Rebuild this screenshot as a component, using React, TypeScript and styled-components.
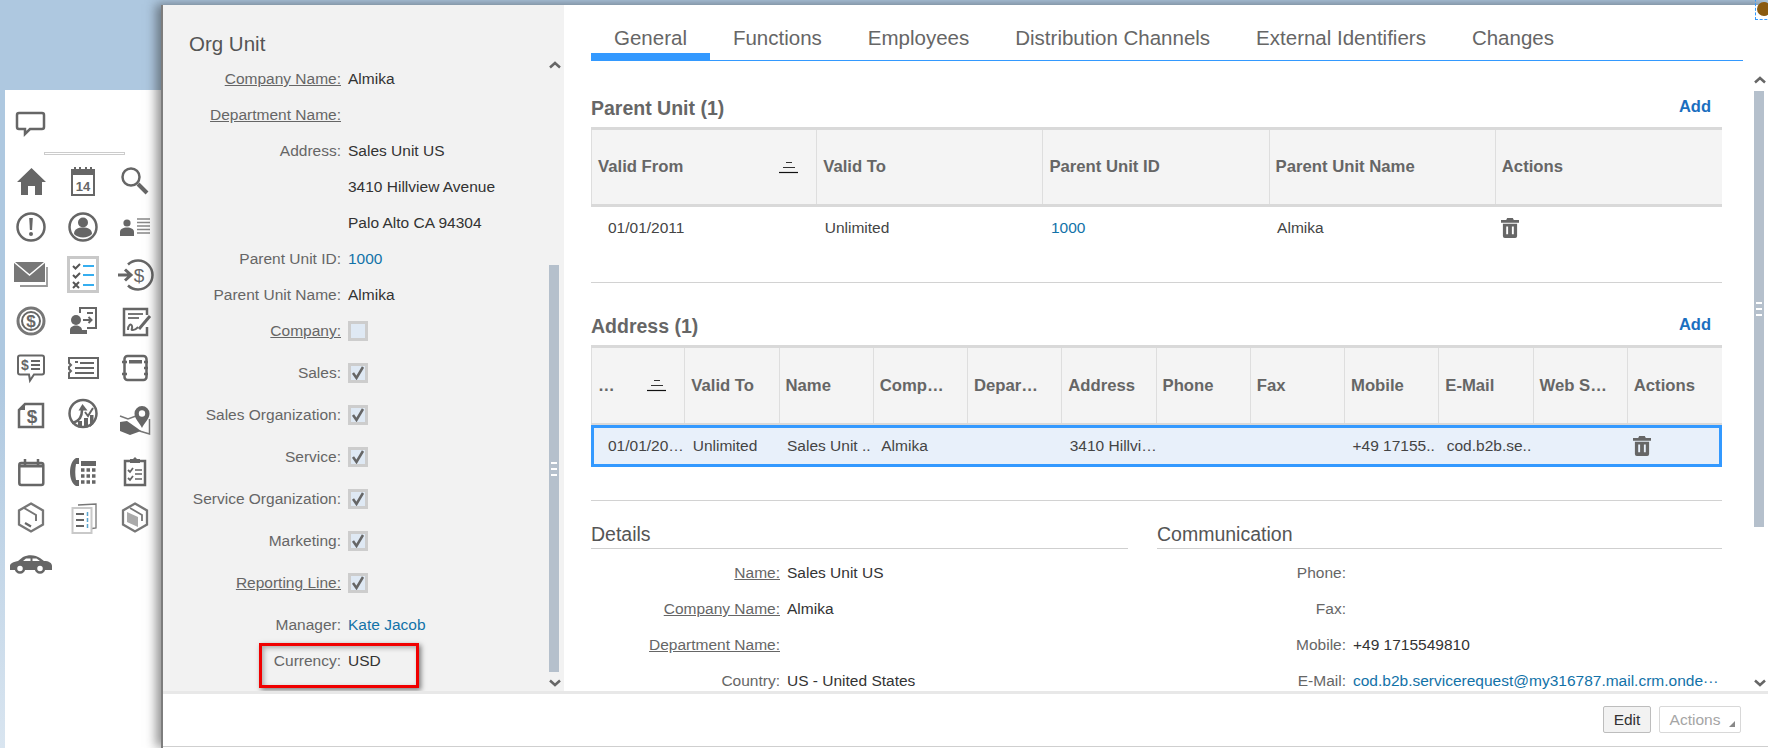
import React from "react";
import styled, { createGlobalStyle } from "styled-components";

const Global = createGlobalStyle`
  html, body { margin: 0; padding: 0; background: #aec8e0; }
  * { box-sizing: border-box; }
  body { font-family: "Liberation Sans", Arial, sans-serif; font-size: 15.5px; color: #333; }
`;

const Page = styled.div`
  position: relative;
  width: 1768px;
  height: 748px;
  overflow: hidden;
  display: flex;
  background: linear-gradient(#aec8e0 0%, #aec8e0 50%, #d9e5f0 100%);
`;

const Nav = styled.nav`
  width: 156px;
  margin: 90px 0 0 5px;
  padding-top: 20px;
  background: #fff;
`;
const NavDivider = styled.div`
  width: 81px;
  height: 3px;
  margin: 12px 0 3px 39px;
  border: 1px solid #ccc;
`;
const NavRow = styled.div<{ $gap?: number; $h?: number }>`
  display: grid;
  grid-template-columns: repeat(3, 52px);
  grid-template-rows: 100%;
  height: ${(p) => p.$h ?? 46}px;
  margin-top: ${(p) => p.$gap ?? 0}px;
  align-items: center;
  justify-items: center;
`;
const Glyph = styled.svg`
  display: block;
  width: 40px;
  height: 40px;
  overflow: visible;
  color: #666;
`;
const G = ({ children }: { children: React.ReactNode }) => <Glyph viewBox="0 0 40 40">{children}</Glyph>;
const gt = { fontFamily: '"Liberation Sans", Arial, sans-serif', fontWeight: 700, fill: "#666", textAnchor: "middle" as const };
const s = { fill: "none", stroke: "#666", strokeWidth: 2.5 };
const s2 = { fill: "none", stroke: "#666", strokeWidth: 2 };

const IconSpeech = () => (
  <G>
    <path {...s} d="M8 8h23a2 2 0 0 1 2 2v12a2 2 0 0 1-2 2H19l-5 5v-5H8a2 2 0 0 1-2-2V10a2 2 0 0 1 2-2z" />
  </G>
);
const IconHome = () => (
  <G>
    <path fill="#666" d="M20.5 7 35 21h-4v13h-7v-9h-7v9h-7V21H6z" />
  </G>
);
const IconCalendar14 = () => (
  <G>
    <rect {...s2} x="9" y="9" width="22" height="25" />
    <rect x="9" y="9" width="22" height="5" fill="#666" />
    <path stroke="#666" strokeWidth="2" d="M12 6v5M17 6v5M23 6v5M28 6v5" />
    <text {...gt} x="20" y="30" fontSize="13">14</text>
  </G>
);
const IconSearch = () => (
  <G>
    <circle {...s} cx="16" cy="16" r="8.5" />
    <path stroke="#666" strokeWidth="4" d="M23 23l9 9" />
  </G>
);
const IconAlert = () => (
  <G>
    <circle {...s} cx="20" cy="20" r="13.5" />
    <path fill="#666" d="M18.2 11h3.6l-.7 12h-2.2z" />
    <circle cx="20" cy="27" r="2" fill="#666" />
  </G>
);
const IconPerson = () => (
  <G>
    <circle {...s} cx="20" cy="20" r="13.5" />
    <circle cx="20" cy="15.5" r="5" fill="#666" />
    <path fill="#666" d="M11 27c0-5 4-6.500 9-6.500s9 1.500 9 6.500c-2 2-5.500 3.500-9 3.500s-7-1.500-9-3.500z" />
  </G>
);
const IconPersonList = () => (
  <G>
    <circle cx="12" cy="16" r="3.600" fill="#666" />
    <path fill="#666" d="M5 29v-4c0-3 3-4.500 7-4.500s7 1.500 7 4.500v4z" />
    <path stroke="#888" strokeWidth="1.500" d="M22 12h13M22 15.500h13M22 19h13M22 22.500h13M22 26h13" />
  </G>
);
const IconMail = () => (
  <G>
    <path fill="none" stroke="#999" strokeWidth="1.800" d="M36 13v19H9" />
    <rect x="3" y="8" width="31" height="20" fill="#777" />
    <path fill="none" stroke="#fff" strokeWidth="1.500" d="M3 8l15.500 13L34 8" />
  </G>
);
const IconChecklist = () => (
  <G>
    <rect x="5.500" y="3.500" width="29" height="34" fill="#fff" stroke="#c9c9c9" strokeWidth="3" />
    <path fill="none" stroke="#555" strokeWidth="2" d="M10 12l2.500 2.500L17 10M10 21l2.500 2.500L17 19M10 28l6 6M16 28l-6 6" />
    <path stroke="#35aef0" strokeWidth="2" d="M20 12h11M20 21h11M20 31h11" />
  </G>
);
const IconArrowDollar = () => (
  <G>
    <path {...s} d="M13 10.500a14.500 14.500 0 1 1 0 21" />
    <path fill="none" stroke="#666" strokeWidth="3" d="M3 21h12M10 15.500l6 5.500-6 5.500" />
    <text {...gt} x="24" y="28" fontSize="19" fontWeight="400">$</text>
  </G>
);
const IconCoin = () => (
  <G>
    <circle fill="none" stroke="#777" strokeWidth="3" cx="20" cy="20" r="13" />
    <circle {...s2} cx="20" cy="20" r="9" />
    <text {...gt} x="20" y="26" fontSize="17">$</text>
  </G>
);
const IconPersonDoc = () => (
  <G>
    <path {...s2} d="M17 12V7h16v20H24" />
    <path stroke="#666" strokeWidth="2" fill="none" d="M20 19h8M25.500 16l3 3-3 3M24 12h6" />
    <circle cx="13" cy="19" r="5" fill="#666" />
    <path fill="#666" d="M7 33v-4c0-3 3-4.500 6-4.500s6 1.500 6 4.500h5v4z" />
  </G>
);
const IconReport = () => (
  <G>
    <path {...s} d="M32 14V8H9v26h23v-8" />
    <path stroke="#777" strokeWidth="1.800" d="M13 13h15M13 17h11" />
    <path fill="none" stroke="#666" strokeWidth="2" d="M13 29c0-5 3-7 4-4s-2 4 1 4 4-2 5-3" />
    <path fill="none" stroke="#666" strokeWidth="3" d="M24 28l11-13" />
  </G>
);
const IconSpeechDollar = () => (
  <G>
    <path {...s2} d="M9 8.500h22a2 2 0 0 1 2 2v15a2 2 0 0 1-2 2H23l-4 6-1-6H9a2 2 0 0 1-2-2v-15a2 2 0 0 1 2-2z" />
    <text {...gt} x="14" y="23" fontSize="14">$</text>
    <path stroke="#666" strokeWidth="2" d="M20 14h9M20 18h9M20 22h9" />
  </G>
);
const IconTicket = () => (
  <G>
    <path {...s2} d="M6 11h29v20H6v-5l2-2-2-2v-2l2-2-2-2z" />
    <path stroke="#666" strokeWidth="2" d="M12 15h3" />
    <path stroke="#666" strokeWidth="2.200" d="M17 16h14M12 21h19M12 26h19" />
  </G>
);
const IconNotebook = () => (
  <G>
    <rect {...s} x="9.500" y="9" width="22" height="24" rx="3" />
    <rect x="14" y="13" width="13" height="3.500" fill="#666" />
    <path stroke="#666" strokeWidth="2.500" d="M7 15h5M7 27h5M29 15h4M29 21h4M29 27h4" />
  </G>
);
const IconDocDollar = () => (
  <G>
    <path {...s} d="M14 6h18v23H8V12z" />
    <path fill="#666" d="M8 12l6-6v6z" />
    <text {...gt} x="21" y="25" fontSize="19">$</text>
  </G>
);
const IconGrowth = () => (
  <G>
    <circle {...s} cx="20" cy="15.500" r="13.500" />
    <path fill="#666" d="M15 23h4v6.500h-4zM21 20h4v9.500h-4zM27 17h3.500v9l-3.500 3z" />
    <path fill="none" stroke="#666" strokeWidth="2.500" d="M9 25c4-1 6-2 8-5s2-5 2-8" />
    <path fill="#666" d="M19.500 6l5 6.500h-9z" />
    <path fill="none" stroke="#666" strokeWidth="2" d="M22 14l3 4 5-8" />
  </G>
);
const IconMap = () => (
  <G>
    <path fill="none" stroke="#777" strokeWidth="1.500" d="M5 18l8 3 8-3M34.500 21v15l-10-3" />
    <path fill="#666" d="M5 24l7-1 10 7 4 3-11 4-10-4z" />
    <path fill="#666" d="M27 8a7.500 7.500 0 0 1 7.500 7.500C34.500 21 29 25 27 30c-2-5-7.500-9-7.500-14.500A7.500 7.500 0 0 1 27 8z" />
    <circle cx="27" cy="15.500" r="3.200" fill="#fff" />
  </G>
);
const IconCalendar = () => (
  <G>
    <rect {...s} x="8.300" y="11" width="24" height="22" rx="2" />
    <path stroke="#666" strokeWidth="3" d="M8 14h25" />
    <path stroke="#666" strokeWidth="2.500" d="M14 7v6M27 7v6" />
  </G>
);
const IconPhone = () => (
  <G>
    <path fill="#666" d="M13 6h3v6h-3c-1 5-1 11 0 16h3v6h-3c-4-2-6-8-6-14s2-12 6-14z" />
    <rect x="18" y="9" width="15" height="5" fill="#666" />
    <path stroke="#666" strokeWidth="3.500" strokeDasharray="3.500 2" d="M18 18h15M18 24h15M18 30h15" />
  </G>
);
const IconClipboard = () => (
  <G>
    <rect {...s} x="10" y="9" width="20" height="24" />
    <path fill="#666" d="M15 7h3l2-2 2 2h3v4H15z" />
    <path fill="none" stroke="#666" strokeWidth="1.800" d="M13 18l2 2 3-4M13 26l2 2 3-4" />
    <path stroke="#666" strokeWidth="1.500" d="M20 18h7M20 22h7M20 27h7" />
  </G>
);
const IconCube = () => (
  <G>
    <path fill="none" stroke="#777" strokeWidth="2.300" d="M20 5.500l12 7v14l-12 7-12-7v-14z" />
    <path fill="none" stroke="#777" strokeWidth="2" d="M13 10l12 7v6" />
    <path stroke="#666" strokeWidth="2.200" d="M14 25l6 3.500" />
  </G>
);
const IconDocs = () => (
  <G>
    <path fill="none" stroke="#777" strokeWidth="1.300" d="M15 7l18-1v24l-4 .5" />
    <rect x="9.500" y="10" width="19" height="25" fill="#fff" stroke="#c9c9c9" strokeWidth="2" />
    <path stroke="#666" strokeWidth="2" d="M13 16h8M13 22h8M13 28h8" />
    <path stroke="#5aa5cf" strokeWidth="1.500" d="M24.500 14v4M24.500 20v4M24.500 26v4" />
  </G>
);
const IconCubeFill = () => (
  <G>
    <path fill="none" stroke="#777" strokeWidth="2.300" d="M20 5.500l12 7v14l-12 7-12-7v-14z" />
    <path fill="#aaa" d="M12 14l11 5v10l-11-5z" />
    <path fill="none" stroke="#777" strokeWidth="1.800" d="M15 10l12 7v6" />
  </G>
);
const IconCar = () => (
  <G>
    <path fill="#666" d="M-1 21c0-2 2-4 8-5l5-4c6-3 13-2 17 1l4 3c5 0 8 2 8 5v4H-1z" />
    <path fill="#fff" d="M12 16l3-2.500h4.500V16zM21.500 13.500h4l3.500 2.500h-7.500z" />
    <circle cx="9" cy="23.500" r="4" fill="#fff" stroke="#666" strokeWidth="2.500" />
    <circle cx="29" cy="23.500" r="4" fill="#fff" stroke="#666" strokeWidth="2.500" />
  </G>
);

const navRows: { gap?: number; icons: React.FC[] }[] = [
  { icons: [IconHome, IconCalendar14, IconSearch] },
  { icons: [IconAlert, IconPerson, IconPersonList] },
  { gap: 1, icons: [IconMail, IconChecklist, IconArrowDollar] },
  { gap: 1, icons: [IconCoin, IconPersonDoc, IconReport] },
  { icons: [IconSpeechDollar, IconTicket, IconNotebook] },
  { gap: 5, icons: [IconDocDollar, IconGrowth, IconMap] },
  { gap: 8, icons: [IconCalendar, IconPhone, IconClipboard] },
  { icons: [IconCube, IconDocs, IconCubeFill] },
  { gap: 1, icons: [IconCar] },
];

const Dialog = styled.div`
  position: relative;
  flex: 1;
  min-width: 0;
  margin-top: 5px;
  display: flex;
  flex-direction: column;
  background: #fff;
  border-left: 2px solid #7d7d7d;
  box-shadow: -5px -1px 10px rgba(40, 40, 40, 0.5);
`;
const Body = styled.div`
  height: 686px;
  display: flex;
  overflow: hidden;
`;
const LeftPane = styled.aside`
  position: relative;
  width: 401px;
  flex: none;
  display: flex;
  background: #f2f2f2;
`;
const FormColumn = styled.div`
  flex: 1;
  min-width: 0;
`;
const PaneTitle = styled.h2`
  margin: 21px 0 0;
  padding-left: 26px;
  height: 35px;
  font-size: 20.5px;
  line-height: 36px;
  font-weight: 400;
  color: #555;
`;
const FormRow = styled.div<{ $tall?: boolean; $labelWidth?: number }>`
  display: grid;
  grid-template-columns: ${(p) => p.$labelWidth ?? 178}px 1fr;
  column-gap: 7px;
  height: ${(p) => (p.$tall ? 42 : 36)}px;
  line-height: 36px;
  white-space: nowrap;
`;
const Label = styled.span<{ $u?: boolean }>`
  text-align: right;
  color: #666;
  text-decoration: ${(p) => (p.$u ? "underline" : "none")};
`;
const Value = styled.span`
  color: #333;
  min-width: 0;
`;
const LinkValue = styled(Value)`
  color: #1272a8;
`;
const CheckBox = styled.span`
  display: flex;
  align-items: center;
  justify-content: center;
  width: 20px;
  height: 20px;
  margin-top: 8px;
  background: #dfe9f4;
  border: 3px solid #cdcdcd;
`;
const Check = styled.svg`
  width: 14px;
  height: 14px;
  flex: none;
`;
const Rail = styled.div<{ $right: number; $thumbTop: number }>`
  width: 10px;
  margin-right: ${(p) => p.$right}px;
  flex: none;
  height: 686px;
  padding-top: ${(p) => p.$thumbTop}px;
  position: relative;
`;
const Thumb = styled.div<{ $h: number }>`
  height: ${(p) => p.$h}px;
  background: #b5c0cc;
  display: flex;
  align-items: center;
  justify-content: center;
`;
const Grip = styled.div`
  width: 6px;
  height: 14px;
  background: repeating-linear-gradient(#fff 0 2px, transparent 2px 6px);
`;
const Chevron = styled.svg<{ $top: number }>`
  position: absolute;
  left: 0;
  top: ${(p) => p.$top}px;
  width: 12px;
  height: 8px;
`;
const Up = ({ top }: { top: number }) => (
  <Chevron $top={top} viewBox="0 0 12 8"><path fill="none" stroke="#666" strokeWidth="2.500" d="M1 6.500l5-4.500 5 4.500" /></Chevron>
);
const Down = ({ top }: { top: number }) => (
  <Chevron $top={top} viewBox="0 0 12 8"><path fill="none" stroke="#666" strokeWidth="2.500" d="M1 1.500l5 4.500 5-4.500" /></Chevron>
);
const Highlight = styled.div`
  position: absolute;
  left: 96px;
  top: 638px;
  width: 160px;
  height: 45px;
  border: 3px solid #f00000;
  box-shadow: 2px 2px 5px rgba(0, 0, 0, 0.5), inset 2px 2px 5px rgba(0, 0, 0, 0.3);
`;

const Main = styled.main`
  flex: 1;
  min-width: 0;
  overflow: hidden;
`;
const TabBar = styled.div`
  display: flex;
  height: 56px;
  margin: 0 11px 0 27px;
  border-bottom: 1px solid #3399ff;
`;
const Tab = styled.div<{ $active?: boolean }>`
  height: 56px;
  padding: 21px 23px 0;
  font-size: 20.5px;
  line-height: 24px;
  color: #666;
  white-space: nowrap;
  border-bottom: 8px solid ${(p) => (p.$active ? "#3399ff" : "transparent")};
  margin-bottom: -1px;
`;
const Content = styled.div`
  margin: 0 32px 0 27px;
`;
const SectionHead = styled.div<{ $h: number }>`
  display: flex;
  justify-content: space-between;
  align-items: flex-end;
  height: ${(p) => p.$h}px;
  padding-bottom: 7px;
`;
const SectionTitle = styled.h3`
  margin: 0;
  font-size: 19.5px;
  line-height: 24px;
  font-weight: 700;
  color: #666;
`;
const AddLink = styled.a`
  margin: 0 11px 4px 0;
  font-size: 16.5px;
  line-height: 20px;
  font-weight: 700;
  color: #1b6fc0;
`;
const Table = styled.div<{ $cols: number }>`
  display: grid;
  grid-template-columns: repeat(${(p) => p.$cols}, 1fr);
  border-top: 3px solid #d9d9d9;
`;
const HeadCell = styled.div<{ $narrow?: boolean }>`
  display: flex;
  align-items: center;
  justify-content: space-between;
  min-width: 0;
  height: ${(p) => (p.$narrow ? 75 : 74)}px;
  padding: 0 6px;
  background: #f4f4f4;
  border-right: 1px solid #dedede;
  font-size: 16.7px;
  font-weight: 700;
  color: #666;
  white-space: nowrap;
  &:first-child { border-left: 1px solid #dedede; }
  &:nth-child(${(p) => (p.$narrow ? 12 : 5)}) { border-right: none; }
`;
const SortMark = styled.svg`
  flex: none;
  width: 19px;
  height: 13px;
  margin-right: 12px;
`;
const Sort = () => (
  <SortMark viewBox="0 0 19 13">
    <path stroke="#333" strokeWidth="1.200" d="M7 1.500h6M4 6.500h12" />
    <path stroke="#111" strokeWidth="1.200" d="M0 11.500h19" />
  </SortMark>
);
const HeadRule = styled.div<{ $h: number }>`
  grid-column: 1 / -1;
  height: ${(p) => p.$h}px;
  background: #d9d9d9;
`;
const Cell = styled.div<{ $first?: boolean }>`
  display: flex;
  align-items: center;
  min-width: 0;
  height: 42px;
  padding-left: ${(p) => (p.$first ? 17 : 7.5)}px;
  white-space: nowrap;
  color: #444;
`;
const CellLink = styled.span`
  color: #1272a8;
`;
const SelectedRow = styled.div`
  grid-column: 1 / -1;
  display: grid;
  grid-template-columns: repeat(12, 1fr);
  height: 42px;
  background: #e8f0fa;
  outline: 3px solid #3399ff;
  outline-offset: -3px;
`;
const Trash = styled.svg`
  display: block;
  width: 18px;
  height: 20px;
  margin-left: -2px;
`;
const TrashIcon = () => (
  <Trash viewBox="0 0 19 21">
    <path fill="#666" fillRule="evenodd" d="M6.500 0h6l1 2H19v3H0V2h5.500zM2 6h15v13a2 2 0 0 1-2 2H4a2 2 0 0 1-2-2zM5.500 9v8h2V9zM11.500 9v8h2V9z" />
  </Trash>
);
const Rule = styled.div<{ $top: number }>`
  height: 1px;
  margin-top: ${(p) => p.$top}px;
  background: #d2d2d2;
`;
const TwoCols = styled.div`
  display: grid;
  grid-template-columns: 537px 565px;
  column-gap: 29px;
`;
const GroupTitle = styled.h4`
  margin: 20px 0 6px;
  height: 28px;
  font-size: 19.5px;
  line-height: 26px;
  font-weight: 400;
  color: #555;
  border-bottom: 1px solid #cfcfcf;
`;
const Footer = styled.footer`
  flex: none;
  display: flex;
  justify-content: flex-end;
  align-items: flex-start;
  gap: 8px;
  height: 56px;
  padding: 12px 27px 0 0;
  border-top: 3px solid #e8e8e8;
  border-bottom: 1px solid #cfcfcf;
`;
const Button = styled.button<{ $muted?: boolean }>`
  position: relative;
  height: 27px;
  width: ${(p) => (p.$muted ? 82 : 48)}px;
  padding: ${(p) => (p.$muted ? "0 10px 0 0" : "0")};
  font: 15.5px "Liberation Sans", Arial, sans-serif;
  color: ${(p) => (p.$muted ? "#a5a5a5" : "#333")};
  background: ${(p) => (p.$muted ? "#fff" : "#f2f2f2")};
  border: 1px solid ${(p) => (p.$muted ? "#d8d8d8" : "#bdbdbd")};
  border-radius: 2px;
`;
const Caret = styled.i`
  position: absolute;
  right: 5px;
  bottom: 5px;
  width: 0;
  height: 0;
  border-left: 6px solid transparent;
  border-bottom: 6px solid #888;
`;
const CornerBadge = styled.div`
  position: absolute;
  right: -4px;
  top: -6px;
  width: 17px;
  height: 26px;
  border: 1px dashed #3399ff;
`;
const CornerDot = styled.div`
  width: 14px;
  height: 14px;
  margin: 7px 0 0 1px;
  border-radius: 50%;
  background: #8a5a10;
`;

const leftRows: { label: string; u?: boolean; value?: string; link?: boolean; check?: "on" | "off" }[] = [
  { label: "Company Name:", u: true, value: "Almika" },
  { label: "Department Name:", u: true },
  { label: "Address:", value: "Sales Unit US" },
  { label: "", value: "3410 Hillview Avenue" },
  { label: "", value: "Palo Alto CA 94304" },
  { label: "Parent Unit ID:", value: "1000", link: true },
  { label: "Parent Unit Name:", value: "Almika" },
  { label: "Company:", u: true, check: "off" },
  { label: "Sales:", check: "on" },
  { label: "Sales Organization:", check: "on" },
  { label: "Service:", check: "on" },
  { label: "Service Organization:", check: "on" },
  { label: "Marketing:", check: "on" },
  { label: "Reporting Line:", u: true, check: "on" },
  { label: "Manager:", value: "Kate Jacob", link: true },
  { label: "Currency:", value: "USD" },
];
const tabs = ["General", "Functions", "Employees", "Distribution Channels", "External Identifiers", "Changes"];
const addressHead = ["Valid To", "Name", "Comp…", "Depar…", "Address", "Phone", "Fax", "Mobile", "E-Mail", "Web S…", "Actions"];
const addressRow = ["01/01/20…", "Unlimited", "Sales Unit ..", "Almika", "", "3410 Hillvi…", "", "", "+49 17155..", "cod.b2b.se..", ""];
const details = [
  { label: "Name:", u: true, value: "Sales Unit US" },
  { label: "Company Name:", u: true, value: "Almika" },
  { label: "Department Name:", u: true, value: "" },
  { label: "Country:", value: "US - United States" },
];
const comms = [
  { label: "Phone:", value: "" },
  { label: "Fax:", value: "" },
  { label: "Mobile:", value: "+49 1715549810" },
  { label: "E-Mail:", value: "cod.b2b.servicerequest@my316787.mail.crm.onde···", link: true },
];

export default function App() {
  return (
    <Page>
      <Global />
      <Nav>
        <NavRow $h={30}><IconSpeech /></NavRow>
        <NavDivider />
        {navRows.map((r, i) => (
          <NavRow key={i} $gap={r.gap}>
            {r.icons.map((I, j) => <I key={j} />)}
          </NavRow>
        ))}
      </Nav>
      <Dialog>
        <Body>
          <LeftPane>
            <FormColumn>
              <PaneTitle>Org Unit</PaneTitle>
              {leftRows.map((r, i) => (
                <FormRow key={i} $tall={!!r.check}>
                  <Label $u={r.u}>{r.label}</Label>
                  {r.check ? (
                    <CheckBox>
                      {r.check === "on" && (
                        <Check viewBox="0 0 14 14"><path fill="none" stroke="#666" strokeWidth="2.500" d="M2 7l3.500 5L12 1" /></Check>
                      )}
                    </CheckBox>
                  ) : r.link ? <LinkValue>{r.value}</LinkValue> : <Value>{r.value}</Value>}
                </FormRow>
              ))}
            </FormColumn>
            <Rail $right={5} $thumbTop={260}>
              <Up top={56} />
              <Thumb $h={407}><Grip /></Thumb>
              <Down top={674} />
            </Rail>
            <Highlight />
          </LeftPane>
          <Main>
            <TabBar>
              {tabs.map((t, i) => <Tab key={t} $active={i === 0}>{t}</Tab>)}
            </TabBar>
            <Content>
              <SectionHead $h={66}>
                <SectionTitle>Parent Unit (1)</SectionTitle>
                <AddLink>Add</AddLink>
              </SectionHead>
              <Table $cols={5}>
                <HeadCell>Valid From<Sort /></HeadCell>
                <HeadCell>Valid To</HeadCell>
                <HeadCell>Parent Unit ID</HeadCell>
                <HeadCell>Parent Unit Name</HeadCell>
                <HeadCell>Actions</HeadCell>
                <HeadRule $h={3} />
                <Cell $first>01/01/2011</Cell>
                <Cell>Unlimited</Cell>
                <Cell><CellLink>1000</CellLink></Cell>
                <Cell>Almika</Cell>
                <Cell><TrashIcon /></Cell>
              </Table>
              <Rule $top={33} />
              <SectionHead $h={62}>
                <SectionTitle>Address (1)</SectionTitle>
                <AddLink>Add</AddLink>
              </SectionHead>
              <Table $cols={12}>
                <HeadCell $narrow>…<Sort /></HeadCell>
                {addressHead.map((h) => <HeadCell $narrow key={h}>{h}</HeadCell>)}
                <HeadRule $h={2} />
                <SelectedRow>
                  {addressRow.map((v, i) => (
                    <Cell key={i} $first={i === 0}>{v}</Cell>
                  ))}
                  <Cell><TrashIcon /></Cell>
                </SelectedRow>
              </Table>
              <Rule $top={33} />
              <TwoCols>
                <div>
                  <GroupTitle>Details</GroupTitle>
                  {details.map((r) => (
                    <FormRow key={r.label} $labelWidth={189}>
                      <Label $u={r.u}>{r.label}</Label>
                      <Value>{r.value}</Value>
                    </FormRow>
                  ))}
                </div>
                <div>
                  <GroupTitle>Communication</GroupTitle>
                  {comms.map((r) => (
                    <FormRow key={r.label} $labelWidth={189}>
                      <Label>{r.label}</Label>
                      {r.link ? <LinkValue>{r.value}</LinkValue> : <Value>{r.value}</Value>}
                    </FormRow>
                  ))}
                </div>
              </TwoCols>
            </Content>
          </Main>
          <Rail $right={4} $thumbTop={86}>
            <Up top={71} />
            <Thumb $h={436}><Grip /></Thumb>
            <Down top={674} />
          </Rail>
        </Body>
        <Footer>
          <Button>Edit</Button>
          <Button $muted>Actions<Caret /></Button>
        </Footer>
      </Dialog>
      <CornerBadge><CornerDot /></CornerBadge>
    </Page>
  );
}
